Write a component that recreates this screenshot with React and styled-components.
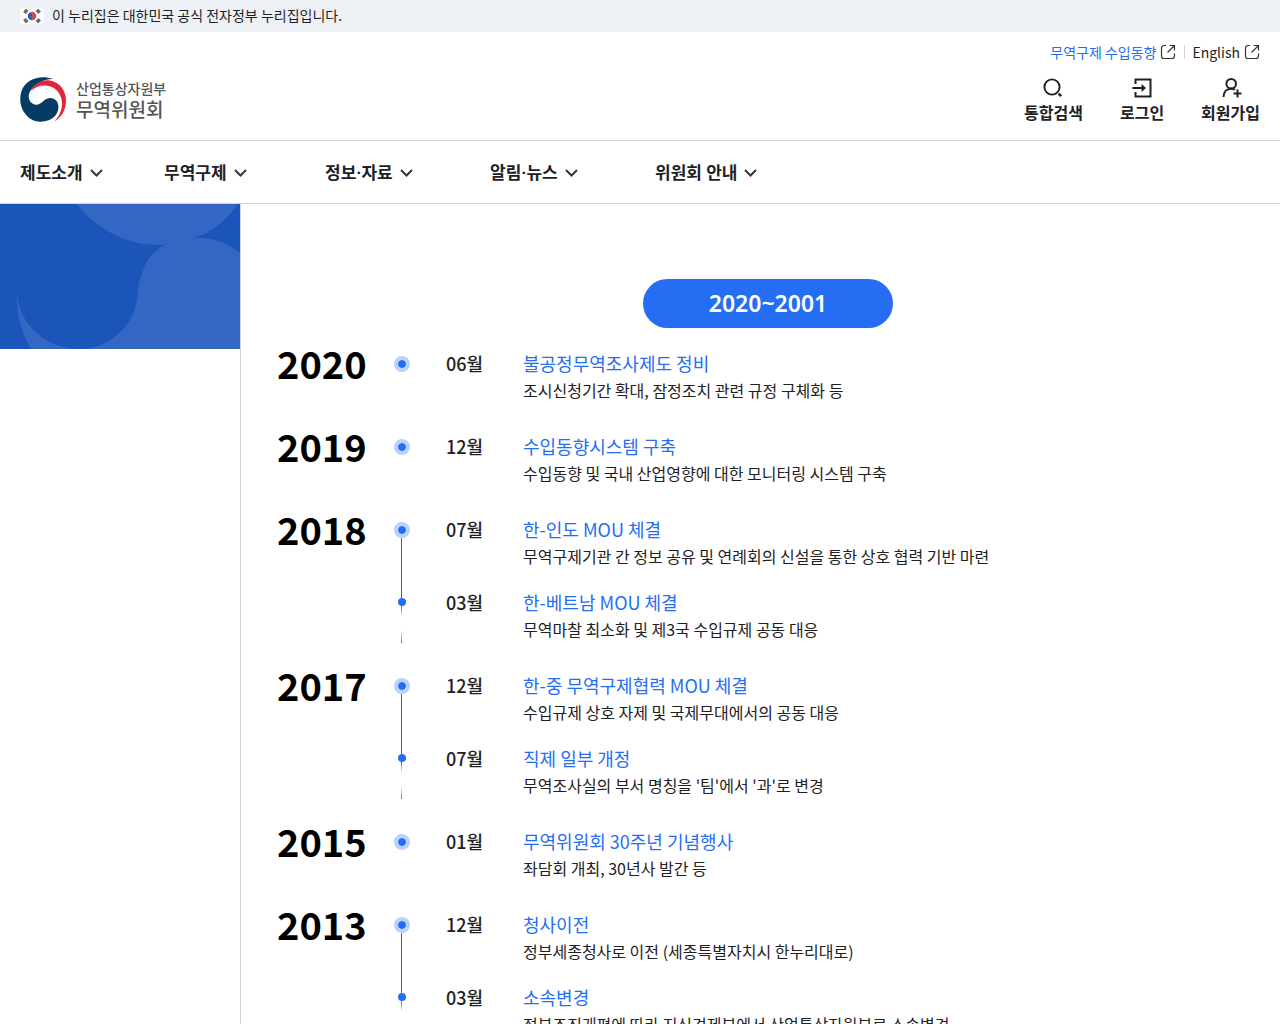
import React from 'react';
import styled, { createGlobalStyle } from 'styled-components';

const navItems = ['제도소개', '무역구제', '정보·자료', '알림·뉴스', '위원회 안내'];

const history = [
    {
        year: '2020',
        items: [
            { month: '06월', title: '불공정무역조사제도 정비', text: '조시신청기간 확대, 잠정조치 관련 규정 구체화 등' },
        ],
    },
    {
        year: '2019',
        items: [
            { month: '12월', title: '수입동향시스템 구축', text: '수입동향 및 국내 산업영향에 대한 모니터링 시스템 구축' },
        ],
    },
    {
        year: '2018',
        items: [
            { month: '07월', title: '한-인도 MOU 체결', text: '무역구제기관 간 정보 공유 및 연례회의 신설을 통한 상호 협력 기반 마련' },
            { month: '03월', title: '한-베트남 MOU 체결', text: '무역마찰 최소화 및 제3국 수입규제 공동 대응' },
        ],
    },
    {
        year: '2017',
        items: [
            { month: '12월', title: '한-중 무역구제협력 MOU 체결', text: '수입규제 상호 자제 및 국제무대에서의 공동 대응' },
            { month: '07월', title: '직제 일부 개정', text: "무역조사실의 부서 명칭을 '팀'에서 '과'로 변경" },
        ],
    },
    {
        year: '2015',
        items: [
            { month: '01월', title: '무역위원회 30주년 기념행사', text: '좌담회 개최, 30년사 발간 등' },
        ],
    },
    {
        year: '2013',
        items: [
            { month: '12월', title: '청사이전', text: '정부세종청사로 이전 (세종특별자치시 한누리대로)' },
            { month: '03월', title: '소속변경', text: '정부조직개편에 따라 지식경제부에서 산업통상자원부로 소속변경' },
        ],
    },
];

const FlagIcon = () => (
    <svg width="24" height="16" viewBox="0 0 24 16" aria-hidden="true">
        <rect width="24" height="16" rx="2" fill="#fbfcfd" />
        <path d="M8.4 5.8a4.2 4.2 0 0 1 7.2 4.4A2.1 2.1 0 0 1 12 8a2.1 2.1 0 0 0-3.6-2.2z" fill="#d8414b" />
        <path d="M8.4 5.8a4.2 4.2 0 0 0 7.2 4.4A2.1 2.1 0 0 1 12 8a2.1 2.1 0 0 0-3.6-2.2z" fill="#2a5ca8" />
        <g stroke="#333" strokeWidth="3.4" strokeDasharray="1 0.4">
            <path d="M4.6 4.8l2.6-3M17 1.8l2.6 3M4.6 11.2l2.6 3M17 14.2l2.6-3" />
        </g>
    </svg>
);

const LogoIcon = () => (
    <svg width="46" height="46" viewBox="0 0 46 46" aria-hidden="true">
        <path d="M11 14C15 6 22 2.5 30 3.5 40 5 46 14 46 23.5 46 33 41.5 40.5 34.500 44.500 39.500 39 42.500 32 42 25 41 15 34 9 26 8.500 20 8 15 10 11 14z" fill="#e4243d" />
        <path d="M33 2C20-2.500 6 2 1.500 14-2 25 2 36 10 41.500c8 5.500 19 3.500 25-2.500 4-4.500 4.500-11 1.500-15-3-4-9-4-12.500-.5-4 4-7.500 5.500-11.500 3-4.500-3-5-9-1.500-13.500C15.500 6.500 22 2.500 33 2z" fill="#063c63" />
    </svg>
);

const ExternalIcon = () => (
    <svg width="16" height="16" viewBox="0 0 16 16" fill="none" stroke="#333" strokeWidth="1.2" aria-hidden="true">
        <path d="M6 1.500H4a2.500 2.500 0 0 0-2.500 2.500v8A2.500 2.500 0 0 0 4 14.500h8a2.500 2.500 0 0 0 2.500-2.500V9.500M9.500 1.500h5v5M14.500 1.500L7.500 8.500" />
    </svg>
);

const SearchIcon = () => (
    <svg width="22" height="22" viewBox="0 0 22 22" fill="none" stroke="#1e2124" strokeWidth="1.9" aria-hidden="true">
        <circle cx="10" cy="10" r="7.6" />
        <path d="M16.600 16.600l2.600 2.600" strokeWidth="2.4" />
    </svg>
);

const LoginIcon = () => (
    <svg width="22" height="22" viewBox="0 0 22 22" fill="none" stroke="#1e2124" strokeWidth="2" aria-hidden="true">
        <path d="M4.500 7V2.500h15v17h-15V15M1.500 11H12" />
        <path d="M10.500 7l4.500 4-4.500 4z" fill="#1e2124" stroke="none" />
    </svg>
);

const JoinIcon = () => (
    <svg width="22" height="22" viewBox="0 0 22 22" fill="none" stroke="#1e2124" strokeWidth="2" aria-hidden="true">
        <circle cx="11.200" cy="6.700" r="4.800" />
        <path d="M3.500 20c.2-5 3-8.300 7.500-8.300 1.700 0 3 .4 4 1.100M17.500 12.500v8M13.500 16.500h8" />
    </svg>
);

const ChevronIcon = () => (
    <svg width="13" height="10" viewBox="0 0 13 10" fill="none" stroke="#33363d" strokeWidth="2" aria-hidden="true">
        <path d="M1 3l5.500 5.500L12 3" />
    </svg>
);

const BannerArt = () => (
    <svg width="240" height="145" viewBox="0 0 240 145" aria-hidden="true">
        <rect width="240" height="145" fill="#1b55ba" />
        <g fill="#3466c4">
            <path d="M77 0c20 26 50 41 82 41 10 0 24-3 34-7C210 30 226 17 238 0z" />
            <path d="M165 41c-16 8-25 25-27 46-1 32-26 58-59 58-34 0-61-26-62-57-1 21 4 41 14 57h209V49c-12-9-25-15-40-15-13 0-25 2-35 7z" />
        </g>
    </svg>
);

const App = () => (
    <>
        <GlobalStyle />
        <GovBar>
            <FlagIcon />
            <span>이 누리집은 대한민국 공식 전자정부 누리집입니다.</span>
        </GovBar>
        <Header>
            <Logo href="#">
                <LogoIcon />
                <LogoText>
                    <small>산업통상자원부</small>
                    <strong>무역위원회</strong>
                </LogoText>
            </Logo>
            <HeaderSide>
                <UtilLinks>
                    <UtilLink href="#" $active>무역구제 수입동향 <ExternalIcon /></UtilLink>
                    <UtilLink href="#">English <ExternalIcon /></UtilLink>
                </UtilLinks>
                <Actions>
                    <ActionButton type="button"><SearchIcon />통합검색</ActionButton>
                    <ActionButton type="button"><LoginIcon />로그인</ActionButton>
                    <ActionButton type="button"><JoinIcon />회원가입</ActionButton>
                </Actions>
            </HeaderSide>
        </Header>
        <Nav>
            {navItems.map((item) => (
                <NavButton key={item} type="button">{item}<ChevronIcon /></NavButton>
            ))}
        </Nav>
        <Layout>
            <Sidebar>
                <BannerArt />
            </Sidebar>
            <Main>
                <Period>2020~2001</Period>
                {history.map(({ year, items }) => (
                    <YearBlock key={year}>
                        <Year>{year}</Year>
                        <Items>
                            {items.map((item, index) => (
                                <Item key={item.title}>
                                    <Rail>
                                        {index === 0 ? <Ring /> : <><LeadLine /><Dot /></>}
                                        {items.length > 1 && (index === items.length - 1 ? <FadeLine /> : <Line />)}
                                    </Rail>
                                    <Month>{item.month}</Month>
                                    <Detail>
                                        <h4>{item.title}</h4>
                                        <p>{item.text}</p>
                                    </Detail>
                                </Item>
                            ))}
                        </Items>
                    </YearBlock>
                ))}
            </Main>
        </Layout>
    </>
);

const GlobalStyle = createGlobalStyle`
    * {
        box-sizing: border-box;
        margin: 0;
        padding: 0;
    }
    body {
        background: #fff;
        color: #1e2124;
        font-family: 'Noto Sans CJK KR', 'Noto Sans', sans-serif;
        font-size: 16px;
    }
    a {
        color: inherit;
        text-decoration: none;
    }
    button {
        border: none;
        background: none;
        color: inherit;
        font-family: inherit;
        cursor: pointer;
    }
    svg {
        display: block;
        flex-shrink: 0;
    }
`;

const GovBar = styled.div`
    display: flex;
    align-items: center;
    gap: 8px;
    height: 32px;
    padding: 0 20px;
    background: #edf1f5;
    font-size: 14px;
    span {
        padding-bottom: 2px;
    }
`;

const Header = styled.header`
    display: flex;
    align-items: flex-end;
    justify-content: space-between;
    padding: 10px 20px 16px;
    border-bottom: 1px solid #d2d4d8;
`;

const Logo = styled.a`
    display: flex;
    align-items: center;
    gap: 10px;
    padding-bottom: 1px;
`;

const LogoText = styled.span`
    display: flex;
    flex-direction: column;
    padding-bottom: 2px;
    color: #555;
    small {
        font-size: 14px;
        font-weight: 500;
        line-height: 20px;
    }
    strong {
        font-size: 19px;
        font-weight: 500;
        line-height: 22px;
    }
`;

const HeaderSide = styled.div`
    display: flex;
    flex-direction: column;
    align-items: flex-end;
    gap: 15px;
`;

const UtilLinks = styled.div`
    display: flex;
    align-items: center;
`;

const UtilLink = styled.a`
    display: flex;
    align-items: center;
    gap: 4px;
    color: ${(props) => (props.$active ? '#256ef4' : 'inherit')};
    font-size: 14px;
    line-height: 20px;
    & + & {
        margin-left: 8px;
        padding-left: 8px;
        background: linear-gradient(#d2d4d8, #d2d4d8) left center / 1px 14px no-repeat;
    }
`;

const Actions = styled.div`
    display: flex;
    gap: 37px;
`;

const ActionButton = styled.button`
    display: flex;
    flex-direction: column;
    align-items: center;
    gap: 1px;
    font-size: 16px;
    font-weight: 700;
    line-height: 24px;
`;

const Nav = styled.nav`
    display: grid;
    grid-template-columns: 144px 161px 165px 165px auto;
    justify-content: start;
    height: 63px;
    padding: 0 20px;
    border-bottom: 1px solid #d2d4d8;
    font-family: Roboto, 'Noto Sans CJK KR', sans-serif;
`;

const NavButton = styled.button`
    display: flex;
    align-items: center;
    gap: 7px;
    padding-bottom: 1px;
    font-size: 17px;
    font-weight: 700;
`;

const Layout = styled.div`
    display: grid;
    grid-template-columns: 241px 1fr;
`;

const Sidebar = styled.aside`
    border-right: 1px solid #d2d4d8;
`;

const Main = styled.main`
    padding: 75px 20px 40px 35px;
`;

const Period = styled.h2`
    width: 250px;
    margin: 0 auto 22px;
    border-radius: 25px;
    background: #256ef4;
    color: #fff;
    font-family: 'Noto Sans', sans-serif;
    font-size: 23px;
    font-weight: 600;
    line-height: 49px;
    text-align: center;
`;

const YearBlock = styled.section`
    display: grid;
    grid-template-columns: 117px 1fr;
    margin-bottom: 29px;
`;

const Year = styled.h3`
    padding-left: 1px;
    color: #000;
    font-size: 38px;
    font-weight: 700;
    line-height: 25px;
`;

const Items = styled.ul`
    list-style: none;
`;

const Item = styled.li`
    display: grid;
    grid-template-columns: 18px 77px 1fr;
`;

const Rail = styled.div`
    display: flex;
    flex-direction: column;
    align-items: center;
`;

const Ring = styled.span`
    width: 16px;
    height: 16px;
    margin-top: 6px;
    border: 4px solid #b9d1fb;
    border-radius: 50%;
    background: #256ef4;
    background-clip: padding-box;
`;

const Dot = styled.span`
    width: 8px;
    height: 8px;
    border-radius: 50%;
    background: #256ef4;
`;

const Line = styled.span`
    flex: 1;
    width: 1px;
    margin-right: 1px;
    background: #2a6bc4;
`;

const LeadLine = styled(Line)`
    flex: 0 0 9px;
`;

const FadeLine = styled(Line)`
    background: linear-gradient(#256ef4, transparent 30%, transparent 65%, #6a6f8c);
`;

const Month = styled.span`
    padding-left: 35px;
    font-size: 18px;
    font-weight: 500;
    line-height: 27px;
    white-space: nowrap;
`;

const Detail = styled.div`
    padding-left: 35px;
    ${Item}:not(:last-child) & {
        padding-bottom: 19px;
    }
    h4 {
        color: #256ef4;
        font-size: 18px;
        font-weight: 400;
        line-height: 27px;
    }
    p {
        font-size: 16px;
        line-height: 27px;
    }
`;

export default App;
